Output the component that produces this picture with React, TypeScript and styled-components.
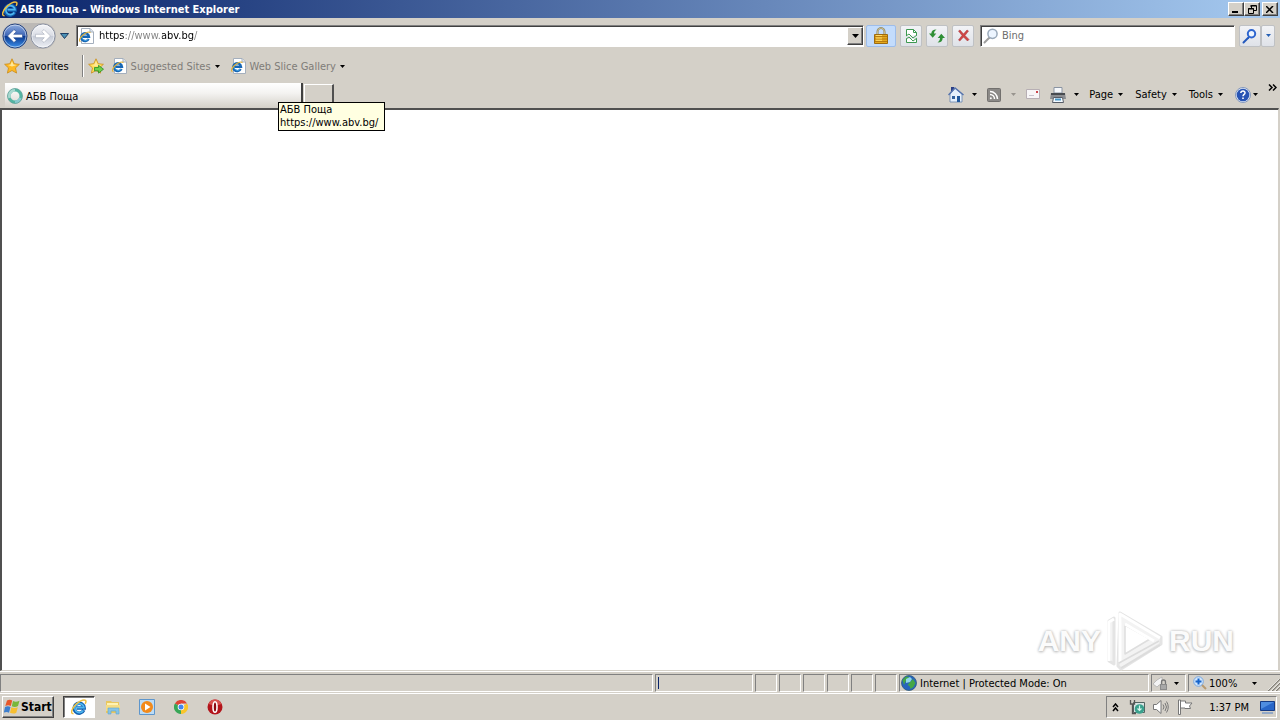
import React from 'react';
import styled, { createGlobalStyle, css } from 'styled-components';

const GlobalStyle = createGlobalStyle`
  * { box-sizing: border-box; }
  body {
    margin: 0;
    background: #d4d0c8;
    color: #000;
    font-family: "DejaVu Sans Condensed", "DejaVu Sans", sans-serif;
    font-size: 11px;
    line-height: 13px;
  }
  button, input { font: inherit; color: inherit; }
  button { padding: 0; margin: 0; cursor: default; }
  svg { display: block; flex: none; }
`;

const Desktop = styled.div`
  display: flex;
  flex-direction: column;
  min-height: 100vh;
`;

/* ---- title bar ---- */
const TitleBar = styled.header`
  display: flex;
  align-items: center;
  height: 18px;
  padding: 0 2px;
  gap: 2px;
  background: linear-gradient(to right, #0a246a, #a6caf0);
`;
const Title = styled.h1`
  flex: 1;
  margin: 0;
  font-size: 11px;
  font-weight: bold;
  color: #fff;
  white-space: nowrap;
`;
const WindowButton = styled.button<{ $apart?: boolean }>`
  display: flex;
  align-items: center;
  justify-content: center;
  width: 16px;
  height: 14px;
  margin-left: ${p => (p.$apart ? '0' : '-2px')};
  background: #d4d0c8;
  border: 1px solid;
  border-color: #fff #404040 #404040 #fff;
  box-shadow: inset -1px -1px #808080;
`;

/* ---- address row ---- */
const NavRow = styled.div`
  display: flex;
  align-items: center;
  height: 35px;
  padding: 0 5px 0 2px;
`;
const NavPair = styled.div`
  display: flex;
  gap: 2px;
  background: #bcb9b6;
  border-radius: 13px;
`;
const IconButton = styled.button`
  display: flex;
  align-items: center;
  background: none;
  border: 0;
`;
const HistoryButton = styled(IconButton)`
  width: 20px;
  padding-right: 3px;
  justify-content: center;
`;
const Field = styled.div`
  display: flex;
  align-items: center;
  height: 22px;
  background: #fff;
  border: 1px solid;
  border-color: #808080 #fff #fff #808080;
  box-shadow: inset 1px 1px #404040;
`;
const AddressField = styled(Field)`
  flex: 1;
  padding-left: 2px;
  gap: 5px;
`;
const TextInput = styled.input`
  flex: 1;
  min-width: 0;
  padding: 0;
  border: 0;
  outline: 0;
  background: none;
`;
const AddressInput = styled(TextInput)`
  color: transparent;
  background: linear-gradient(to right, #000 0 26px, #808080 26px 63px, #000 63px 95px, #808080 95px);
  background-clip: text;
  -webkit-background-clip: text;
`;
const DropButton = styled(WindowButton)`
  height: 18px;
  margin: 1px 0 0;
`;
const ToolButton = styled.button<{ $tint?: boolean; $width?: number; $gap?: number }>`
  display: flex;
  align-items: center;
  justify-content: center;
  width: ${p => p.$width ?? 22}px;
  height: 22px;
  margin-left: ${p => p.$gap ?? 4}px;
  border: 1px solid ${p => (p.$tint ? '#9dbdea' : '#bfc1c4')};
  border-radius: 2px;
  background: ${p => (p.$tint ? '#c3dcfc' : 'linear-gradient(#f2f3f6, #dfe2e8)')};
`;
const SearchField = styled(Field)`
  flex: 0 1 255px;
  margin-left: 6px;
  padding-left: 2px;
  gap: 3px;
  color: #6d6d6d;
`;

/* ---- favourites row ---- */
const FavoritesRow = styled.nav`
  display: flex;
  align-items: center;
  height: 29px;
  padding: 0 4px 3px;
`;
const FavButton = styled(IconButton)<{ $muted?: boolean }>`
  gap: 4px;
  margin-right: ${p => (p.$muted ? 11 : 13)}px;
  color: ${p => (p.$muted ? '#7f7c78' : '#000')};
  white-space: nowrap;
`;
const AddFavorite = styled(IconButton)`
  margin-right: 8px;
`;
const Divider = styled.span`
  width: 2px;
  height: 22px;
  margin-right: 4px;
  border-left: 1px solid #808080;
  border-right: 1px solid #fff;
`;

/* ---- tab row ---- */
const TabRow = styled.div`
  display: flex;
  align-items: flex-end;
  height: 26px;
  padding: 0 3px 0 5px;
`;
const Tab = styled.button`
  display: flex;
  align-items: center;
  gap: 3px;
  flex: 0 1 298px;
  height: 25px;
  padding: 1px 3px 0 2px;
  border: 0;
  border-right: 2px solid #404040;
  background: linear-gradient(#fff, #f4f3f1 40%, #d4d0c8);
`;
const NewTab = styled.button`
  width: 30px;
  height: 24px;
  margin-left: 1px;
  border: 1px solid #fff;
  border-right: 2px solid #505050;
  border-bottom: 0;
  background: #d4d0c8;
`;
const CommandBar = styled.div`
  display: flex;
  align-items: center;
  gap: 10px;
  height: 26px;
  margin-left: auto;
  padding-bottom: 1px;
`;
const Command = styled(IconButton)<{ $gap?: number }>`
  gap: ${p => p.$gap ?? 8}px;
  white-space: nowrap;
`;
const MenuCommand = styled(Command)`
  gap: 5px;
  margin-right: 2px;
`;
const More = styled(IconButton)`
  align-self: flex-start;
  margin-top: 2px;
`;

/* ---- page area ---- */
const Page = styled.main`
  position: relative;
  flex: 1;
  min-height: 300px;
  margin-right: 1px;
  background: #fff;
  border: solid;
  border-width: 2px 1px 1px 2px;
  border-color: #505050 #d4d0c8 #d4d0c8 #505050;
`;
const Tooltip = styled.div`
  position: absolute;
  z-index: 2;
  top: -8px;
  left: 276px;
  padding: 0 6px 1px 1px;
  background: #ffffe1;
  border: 1px solid #000;
  white-space: pre;
`;
const Watermark = styled.div`
  position: absolute;
  right: 44px;
  bottom: -2px;
  display: flex;
  align-items: center;
  gap: 4px;
  font: bold 30px/60px "Liberation Sans", sans-serif;
  color: #fbfbfb;
  text-shadow: 0 0 3px #b4b4b4, 0 1px 3px #c4c4c4;
`;

/* ---- status bar ---- */
const StatusBar = styled.footer`
  display: flex;
  gap: 2px;
  height: 23px;
  padding: 2px 0 1px;
  border-top: 1px solid #fff;
  border-bottom: 1px solid #fff;
`;
const Panel = styled.div<{ $width?: number; $gap?: number }>`
  display: flex;
  align-items: center;
  gap: ${p => p.$gap ?? 3}px;
  ${p => (p.$width ? css`flex: 0 0 ${p.$width}px;` : css`flex: 1;`)}
  padding-left: 1px;
  border: 1px solid;
  border-color: #808080 #fff #fff #808080;
  white-space: nowrap;
  overflow: hidden;
`;
const Progress = styled.span`
  width: 1px;
  height: 12px;
  margin-left: 1px;
  background: #0a246a;
`;
const ZoomPanel = styled(Panel)`
  border-right: 0;
  padding-left: 4px;
`;
const ZoomLevel = styled(IconButton)`
  flex: 1;
  gap: 2px;
`;
const ZoomText = styled.span`
  flex: 1;
  text-align: left;
`;
const Grip = styled.span`
  align-self: flex-end;
  margin-left: 8px;
`;

/* ---- taskbar ---- */
const TaskBar = styled.div`
  display: flex;
  align-items: center;
  height: 26px;
  padding: 0 3px 0 2px;
`;
const StartButton = styled.button`
  display: flex;
  align-items: center;
  gap: 1px;
  width: 52px;
  height: 22px;
  padding-left: 1px;
  margin-right: 9px;
  font-size: 12px;
  font-weight: bold;
  white-space: nowrap;
  background: #d4d0c8;
  border: 1px solid;
  border-color: #fff #404040 #404040 #fff;
  box-shadow: inset -1px -1px #808080;
`;
const TaskButton = styled.button<{ $active?: boolean }>`
  display: flex;
  align-items: center;
  justify-content: center;
  width: 32px;
  height: 22px;
  margin-right: 2px;
  border: 1px solid transparent;
  background: none;
  ${p => p.$active && css`
    background: #fff;
    border-color: #404040 #fff #fff #404040;
    box-shadow: inset 1px 1px #808080;
  `}
`;
const Tray = styled.div`
  display: flex;
  align-items: center;
  gap: 8px;
  height: 22px;
  margin-left: auto;
  padding: 0 1px 0 5px;
  border: 1px solid;
  border-color: #808080 #fff #fff #808080;
`;
const TrayMore = styled(IconButton)`
  margin-right: 2px;
`;
const Clock = styled.time`
  margin: 0 3px 0 8px;
`;

/* ---- drawings ---- */
const Caret = ({ color = '#000' }: { color?: string }) => (
  <svg width="5" height="3" viewBox="0 0 5 3"><path d="M0 0h5L2.500 3z" fill={color} /></svg>
);

const IeMark = () => (
  <svg width="16" height="16" viewBox="0 0 16 16" fill="none">
    <path d="M12.800 11.200A5 5 0 1 1 13.200 9H5.500" stroke="#1260b0" strokeWidth="3.400" />
    <path d="M12.300 11.500A4.600 4.500 0 1 1 13 8.700H5.500" stroke="#4fb6ef" strokeWidth="1.700" />
    <path d="M2.500 14.600C-.4 15 .2 11 3.200 7.200 6.500 3 12.500-.2 14.500 1.400c1 .9.300 2.200-.3 3.400" stroke="#f0c040" strokeWidth="1.500" />
  </svg>
);

const IePage = () => (
  <svg width="15" height="16" viewBox="0 0 15 16" fill="none">
    <path d="M2.500.5h8.700L14.500 4v11.500h-12z" fill="#fff" stroke="#a4afbd" />
    <path d="M11 .8V4h3.300" fill="#dde6f0" stroke="#a4afbd" />
    <path d="M9.600 11A3.900 3.900 0 1 1 10 8.800H3.500" stroke="#1767b5" strokeWidth="2.400" />
    <path d="M9.200 11.200A3.500 3.500 0 0 1 3 9" stroke="#4aa9e6" />
    <path d="M1.500 13.500C-.8 13 1 9.500 4 7s6.800-4 7.300-2.200" stroke="#dfb13d" strokeWidth="1.200" />
  </svg>
);

const NavArrow = ({ forward }: { forward?: boolean }) => {
  const id = forward ? 'nav-forward' : 'nav-back';
  return (
    <svg width="26" height="26" viewBox="0 0 26 26">
      <defs>
        <linearGradient id={id} x2="0" y2="1">
          <stop offset="0" stopColor={forward ? '#f5f6f9' : '#91aee0'} />
          <stop offset=".48" stopColor={forward ? '#dadde5' : '#3d65b6'} />
          <stop offset=".5" stopColor={forward ? '#c5cad6' : '#08358c'} />
          <stop offset="1" stopColor={forward ? '#eff1f6' : '#3e93ed'} />
        </linearGradient>
      </defs>
      <circle cx="13" cy="13" r="12" fill={`url(#${id})`} stroke={forward ? '#8b92a2' : '#25427c'} />
      <circle cx="13" cy="13" r="11" fill="none" stroke="#fff" strokeOpacity=".5" />
      <path
        d="M5.500 13l6.500-6.500 2.300 2.200-2.600 2.600H20.500v3.400h-8.800l2.600 2.600-2.300 2.200z"
        transform={forward ? 'rotate(180 13 13)' : undefined}
        fill="#fff"
        stroke={forward ? '#a5abb9' : '#24498d'}
        strokeWidth=".6"
      />
    </svg>
  );
};

const Star = ({ add }: { add?: boolean }) => (
  <svg width="16" height="16" viewBox="0 0 16 16">
    <path d="M8 .8l2.200 4.900 5.200.6-3.900 3.600 1.100 5.200L8 12.500l-4.600 2.600 1.100-5.200L.6 6.300l5.200-.6z" fill={add ? '#ffe05a' : '#ffb923'} stroke="#c98c1a" strokeWidth=".8" />
    <path d="M8 3l1.400 3.500 3.400.5-4.800 1.500L4 7l2.600-.5z" fill="#ffe89a" />
    {add && <path d="M6.500 9.500h4V7.300l5 3.900-5 3.900v-2.300h-4z" fill="#6fd04b" stroke="#288b25" strokeWidth=".8" />}
  </svg>
);

const Lock = () => (
  <svg width="14" height="17" viewBox="0 0 14 17">
    <path d="M3.500 8V5a3.500 4 0 0 1 7 0v3" fill="none" stroke="#8d8054" strokeWidth="2" />
    <path d="M3.500 8V5a3.500 4 0 0 1 7 0v3" fill="none" stroke="#e0d7ad" strokeWidth=".7" />
    <path d="M.5 7.500h13v9H.5z" fill="#e4a91d" stroke="#9d6b10" />
    <path d="M1 9.500h12M1 12h12M1 14.500h12" stroke="#b67b10" />
    <path d="M2 8.500h6M2 11h6M2 13.300h6" stroke="#ffdc6c" />
  </svg>
);

const BrokenPage = () => (
  <svg width="13" height="16" viewBox="0 0 13 16" fill="none" stroke="#3c9950">
    <path d="M1.500 8V1.500h7l3 3V7M1.500 11v3.500h10V11" fill="#fff" />
    <path d="M8.500 1.500v3h3M1 8l3-2 4 4 4-3M1 11l3-2 4 4 4-3" />
  </svg>
);

const RefreshArrows = () => (
  <svg width="16" height="14" viewBox="0 0 16 14" fill="#2f8f35">
    <path d="M7.500.5C4 .5 2.500 2 2.300 4.500H0l3.700 4.200L7.300 4.500H5C5 3 5.800 1.600 7.500.5z" />
    <path d="M8.500 13.500c3.500 0 5-1.500 5.200-4.500H16l-3.700-4.200L8.700 9H11c0 1.800-.8 3.400-2.500 4.500z" />
  </svg>
);

const StopCross = () => (
  <svg width="13" height="13" viewBox="0 0 13 13"><path d="M1.500 2L5 6.500 1.500 11l1.300 1 3.700-4 4 4 1.500-1.500-4-4L11.500 2 10 1 6.500 5 3 1z" fill="#d04646" stroke="#a52f35" strokeWidth=".5" /></svg>
);

const Lens = ({ strong }: { strong?: boolean }) => (
  <svg width="16" height="16" viewBox="0 0 16 16" fill="none">
    <path d="M6.500 9.500l-5 5" stroke={strong ? '#2459bd' : '#9d9d9d'} strokeWidth="2" strokeLinecap="round" />
    <circle cx="9.500" cy="5.800" r={strong ? 3.700 : 4.600} fill="#edf5ff" stroke={strong ? '#2d65cf' : '#9aa9ba'} strokeWidth={strong ? 2 : 1.500} />
  </svg>
);

const LoadingRing = () => (
  <svg width="16" height="16" viewBox="0 0 16 16" fill="none" strokeWidth="3">
    <circle cx="8" cy="8" r="6" stroke="#54b5a3" />
    <path d="M2.500 10A6 6 0 0 1 8 2" stroke="#a8d9d0" />
    <path d="M8 14a6 6 0 0 0 5.500-4" stroke="#8acbd0" />
    <circle cx="8" cy="8" r="7.500" stroke="#5d9c93" strokeWidth=".7" />
  </svg>
);

const House = () => (
  <svg width="16" height="17" viewBox="0 0 16 17">
    <path d="M3 1h3v5H3z" fill="#2a3e86" />
    <path d="M2 8l5-6 7 6v8H2z" fill="#e6f0fb" stroke="#6583af" strokeWidth=".8" />
    <path d="M.5 9L7 2l8.500 7" fill="none" stroke="#5573ad" strokeWidth="1.500" />
    <path d="M9 10h3v6H9z" fill="#20589c" /><path d="M4 10h3v3H4z" fill="#34619c" />
  </svg>
);

const Feed = () => (
  <svg width="14" height="14" viewBox="0 0 14 14" fill="none" stroke="#fff" strokeWidth="1.500">
    <rect x=".5" y=".5" width="13" height="13" rx="1" fill="#8b8987" stroke="#72706e" strokeWidth="1" />
    <path d="M3 6.500A4.500 4.500 0 0 1 7.500 11M3 3.500A7.500 7.500 0 0 1 10.500 11" />
    <circle cx="3.800" cy="10.200" r="1" fill="#fff" stroke="none" />
  </svg>
);

const Mail = () => (
  <svg width="14" height="11" viewBox="0 0 14 11"><path d="M.5.5h13v9H.5z" fill="#f8f6f7" stroke="#b7afb4" /><path d="M10 2h2v2h-2z" fill="#cc454b" /><path d="M3 6.500h5" stroke="#c8c3cc" /></svg>
);

const Printer = () => (
  <svg width="16" height="16" viewBox="0 0 16 16">
    <path d="M4 .5h8V6H4z" fill="#f6f8fb" stroke="#8a94a3" />
    <path d="M1 6h14l1 6H0z" fill="#8b8d91" /><path d="M1 6h14v2H1z" fill="#484b50" />
    <path d="M3.500 10.500h9l1 5h-11z" fill="#f4faff" stroke="#575c66" /><path d="M5 12.500h6" stroke="#4897c7" strokeWidth="2" />
  </svg>
);

const Help = () => (
  <svg width="16" height="16" viewBox="0 0 16 16" fill="none">
    <circle cx="8" cy="8" r="7.500" fill="#dfe8f6" stroke="#8498bd" /><circle cx="8" cy="8" r="6.300" fill="#2854b4" />
    <path d="M5.800 6C6 3.400 10.300 3.500 10 6c-.1 1.400-2 1.500-2 3.300" stroke="#fff" strokeWidth="1.500" /><path d="M7.200 10.500h1.600V12H7.200z" fill="#fff" />
  </svg>
);

/* Rounded play triangle built from white bands over a soft grey outline. */
const PlayMark = () => (
  <svg width="60" height="62" viewBox="0 0 60 62" fill="none" strokeLinejoin="round">
    <path d="M9 8l-5 3v40l5 3zM15 3l41 24v7L16 59l-3-3z" fill="#f3f3f3" stroke="#e4e4e4" strokeWidth="3" />
    <path d="M20 15v29l25-15z" fill="#fff" stroke="#dedede" strokeWidth="1.500" />
    <path d="M9 9l-5 3v39M15 52V4l40 24M20 14l29 17" stroke="#fff" strokeWidth="3" />
    <path d="M14 53l40-22M16 58l39-23" stroke="#dcdcdc" strokeWidth="1.500" />
  </svg>
);

const Globe = () => (
  <svg width="16" height="16" viewBox="0 0 16 16">
    <circle cx="8" cy="8" r="7.500" fill="#2764bd" stroke="#315a79" strokeWidth=".8" />
    <path d="M1.500 5L5 1.500l3 .5-1 3-2.500 1.500L3 10zM9 7l3-3 2.500 4-2 4-3 2-1-3-2-1z" fill="#44a745" />
    <path d="M5 4l4-2 2 2-2 3-4 1z" fill="#8fd6e8" />
  </svg>
);

const PrivacyLock = () => (
  <svg width="16" height="15" viewBox="0 0 16 15">
    <path d="M0 8l4-4 5-3v7l-3 1-2 2z" fill="#f4f4f4" stroke="#aaa" strokeWidth=".7" />
    <path d="M8.500 8V6a2 2 0 0 1 4 0v2" fill="none" stroke="#777" strokeWidth="1.300" /><path d="M7 8h7v6H7z" fill="#8b8b8b" /><path d="M8 10h5M8 12h5" stroke="#c5c5c5" />
  </svg>
);

const ZoomLens = () => (
  <svg width="14" height="14" viewBox="0 0 14 14"><path d="M8 8l5 5" stroke="#b89a70" strokeWidth="2" /><circle cx="5.500" cy="5.500" r="4.800" fill="#cfe5fc" stroke="#7ba8df" /><path d="M5.500 2.500v6M2.500 5.500h6" stroke="#1563ca" strokeWidth="2" /></svg>
);

const ResizeGrip = () => (
  <svg width="12" height="12" viewBox="0 0 12 12"><path d="M0 12L12 0M4 12l8-8M8 12l4-4" stroke="#858178" strokeWidth="1.500" /><path d="M-1 12L11 0M3 12l9-9M7 12l5-5" stroke="#fff" strokeWidth=".7" /></svg>
);

const WindowsFlag = () => (
  <svg width="16" height="16" viewBox="0 0 16 16">
    <path d="M3 1.500c2-1.300 3.700-1 5.200 0L6.800 7C5 6 3.500 6 1.300 7z" fill="#e7572a" />
    <path d="M9 2c2 1.200 4 1 6.500-.2L14 7c-2 1.200-4.200 1.200-6.200.2z" fill="#79b73b" />
    <path d="M1 8c2-1 4-.8 5.500 0L5 13.700c-1.600-1-3.200-1-5.200 0z" fill="#3d7fce" />
    <path d="M7.400 8.300c2 1 4.200 1 6.400 0l-1.500 5.400c-2 1.200-4.200 1-6.300 0z" fill="#f7bf31" />
  </svg>
);

const Explorer = () => (
  <svg width="16" height="16" viewBox="0 0 16 16"><path d="M1 2h5l1 1h7v11H1z" fill="#e9c75e" /><path d="M2 4h11v7H2z" fill="#fff2b2" /><path d="M1 6h14v6H1z" fill="#f5dc83" /><path d="M3 9h11v6h-3v-3H6v3H3z" fill="#87c3e6" stroke="#5ba4d0" strokeWidth=".6" /></svg>
);

const MediaPlayer = () => (
  <svg width="16" height="16" viewBox="0 0 16 16"><path d="M.5.5h15v15H.5z" fill="#bcdcf6" stroke="#5e96cc" /><circle cx="8" cy="8" r="6" fill="#f28a1b" /><path d="M6 4.500v7L11.500 8z" fill="#fff" /></svg>
);

const Chrome = () => (
  <svg width="14" height="14" viewBox="0 0 14 14"><path d="M7 7L.9 3.500A7 7 0 0 1 13.100 3.500H7z" fill="#df4335" /><path d="M7 7l6.100-3.500A7 7 0 0 1 7 14z" fill="#f9c52b" /><path d="M7 7v7A7 7 0 0 1 .9 3.500z" fill="#38a657" /><circle cx="7" cy="7" r="3.300" fill="#fff" /><circle cx="7" cy="7" r="2.500" fill="#4385ee" /></svg>
);

const Opera = () => (
  <svg width="16" height="16" viewBox="0 0 16 16"><circle cx="8" cy="8" r="7.500" fill="#b3141b" /><path d="M1.500 5a7 7 0 0 1 13 0L8 7z" fill="#d8504e" /><ellipse cx="8" cy="8" rx="2" ry="5.300" fill="#8c0910" stroke="#fff" strokeWidth="1.600" /></svg>
);

const TrayDevice = () => (
  <svg width="16" height="16" viewBox="0 0 16 16"><path d="M4.500 3.500h11v10h-11z" fill="#d9e5e4" stroke="#536361" /><path d="M1.500 1v4h4V1M3.500 5v9.500H7" fill="none" stroke="#555" strokeWidth="1.300" /><circle cx="10.500" cy="10" r="4.800" fill="#3aa18d" /><path d="M10.500 6.500v5M8.500 9.500l2 2 2-2" fill="none" stroke="#d8f5ec" strokeWidth="1.200" /></svg>
);

const Speaker = () => (
  <svg width="16" height="16" viewBox="0 0 16 16" fill="none" stroke="#777"><path d="M.5 5.500h3L8 1.500v13l-4.500-4h-3z" fill="#fff" /><path d="M10 5.500q2 2.500 0 5M12 4q3 4 0 8M13.500 2.500q3.500 5.500 0 11" /></svg>
);

const Flag = () => (
  <svg width="16" height="16" viewBox="0 0 16 16" fill="#fff" stroke="#777"><path d="M1.500 1h2v14.500h-2zM3.500 2h5v2h6.500l-2.500 3 1 2.500H8V9H3.500z" /></svg>
);

const DesktopIcon = () => (
  <svg width="15" height="13" viewBox="0 0 15 13"><path d="M.5.5h14v9H.5z" fill="#2866c8" stroke="#163b84" /><path d="M1 1h13L1 8z" fill="#4f8de0" /><path d="M2 12h11" stroke="#93a9c7" strokeWidth="2" /></svg>
);

export default function App() {
  return (
    <Desktop>
      <GlobalStyle />
      <TitleBar>
        <IeMark />
        <Title>АБВ Поща - Windows Internet Explorer</Title>
        <WindowButton aria-label="Minimize"><svg width="8" height="8"><path d="M0 6h6v2H0z" /></svg></WindowButton>
        <WindowButton aria-label="Restore">
          <svg width="9" height="9" fill="none" stroke="#000"><path d="M3 1h5M3 2V0M3.500 3V.5h5v5H6M.5 3.500h5v5h-5zM0 4h6" /></svg>
        </WindowButton>
        <WindowButton $apart aria-label="Close"><svg width="8" height="7"><path d="M0 0l7 7M7 0L0 7" stroke="#000" strokeWidth="1.500" /></svg></WindowButton>
      </TitleBar>

      <NavRow>
        <NavPair>
          <IconButton aria-label="Back"><NavArrow /></IconButton>
          <IconButton aria-label="Forward"><NavArrow forward /></IconButton>
        </NavPair>
        <HistoryButton aria-label="Recent pages">
          <svg width="9" height="6" viewBox="0 0 9 6"><path d="M.5.5h8L4.500 5.500z" fill="#4a91b5" stroke="#1d3e65" /></svg>
        </HistoryButton>
        <AddressField>
          <IePage />
          <AddressInput aria-label="Address" defaultValue="https://www.abv.bg/" />
          <DropButton aria-label="Show addresses"><svg width="7" height="4"><path d="M0 0h7L3.500 4z" /></svg></DropButton>
        </AddressField>
        <ToolButton $tint $width={30} $gap={2} aria-label="Security report"><Lock /></ToolButton>
        <ToolButton aria-label="Compatibility view"><BrokenPage /></ToolButton>
        <ToolButton aria-label="Refresh"><RefreshArrows /></ToolButton>
        <ToolButton aria-label="Stop"><StopCross /></ToolButton>
        <SearchField>
          <Lens />
          <TextInput aria-label="Search" defaultValue="Bing" />
        </SearchField>
        <ToolButton aria-label="Search"><Lens strong /></ToolButton>
        <ToolButton $width={14} $gap={0} aria-label="Search options"><Caret color="#2560b5" /></ToolButton>
      </NavRow>

      <FavoritesRow>
        <FavButton><Star />Favorites</FavButton>
        <Divider />
        <AddFavorite aria-label="Add to favorites bar"><Star add /></AddFavorite>
        <FavButton $muted><IePage />Suggested Sites <Caret /></FavButton>
        <FavButton $muted><IePage />Web Slice Gallery <Caret /></FavButton>
      </FavoritesRow>

      <TabRow>
        <Tab><LoadingRing />АБВ Поща</Tab>
        <NewTab aria-label="New tab" />
        <CommandBar>
          <Command aria-label="Home"><House /><Caret /></Command>
          <Command $gap={10} aria-label="Feeds"><Feed /><Caret color="#98948e" /></Command>
          <Command aria-label="Read mail"><Mail /></Command>
          <Command aria-label="Print"><Printer /><Caret /></Command>
          <MenuCommand>Page<Caret /></MenuCommand>
          <MenuCommand>Safety<Caret /></MenuCommand>
          <MenuCommand>Tools<Caret /></MenuCommand>
          <Command $gap={2} aria-label="Help"><Help /><Caret /></Command>
          <More aria-label="More commands"><svg width="9" height="7" fill="none" stroke="#000" strokeWidth="1.500"><path d="M1 .5l3 3-3 3M5 .5l3 3-3 3" /></svg></More>
        </CommandBar>
      </TabRow>

      <Page>
        <Tooltip role="tooltip">{'АБВ Поща\nhttps://www.abv.bg/'}</Tooltip>
        <Watermark><span>ANY</span><PlayMark /><span>RUN</span></Watermark>
      </Page>

      <StatusBar>
        <Panel />
        <Panel $width={98}><Progress /></Panel>
        {[0, 1, 2, 3, 4, 5].map(n => <Panel key={n} $width={22} />)}
        <Panel $width={250}><Globe />Internet | Protected Mode: On</Panel>
        <Panel $width={35} $gap={5}><PrivacyLock /><Caret /></Panel>
        <ZoomPanel $width={92}>
          <ZoomLevel><ZoomLens /><ZoomText>100%</ZoomText><Caret /></ZoomLevel>
          <Grip><ResizeGrip /></Grip>
        </ZoomPanel>
      </StatusBar>

      <TaskBar>
        <StartButton><WindowsFlag />Start</StartButton>
        <TaskButton $active aria-label="Internet Explorer"><IeMark /></TaskButton>
        <TaskButton aria-label="Windows Explorer"><Explorer /></TaskButton>
        <TaskButton aria-label="Media Player"><MediaPlayer /></TaskButton>
        <TaskButton aria-label="Chrome"><Chrome /></TaskButton>
        <TaskButton aria-label="Opera"><Opera /></TaskButton>
        <Tray>
          <TrayMore aria-label="Show hidden icons"><svg width="7" height="9" fill="none" stroke="#000" strokeWidth="1.500"><path d="M1 4l2.500-3L6 4M1 8l2.500-3L6 8" /></svg></TrayMore>
          <TrayDevice />
          <Speaker />
          <Flag />
          <Clock>1:37 PM</Clock>
          <DesktopIcon />
        </Tray>
      </TaskBar>
    </Desktop>
  );
}
